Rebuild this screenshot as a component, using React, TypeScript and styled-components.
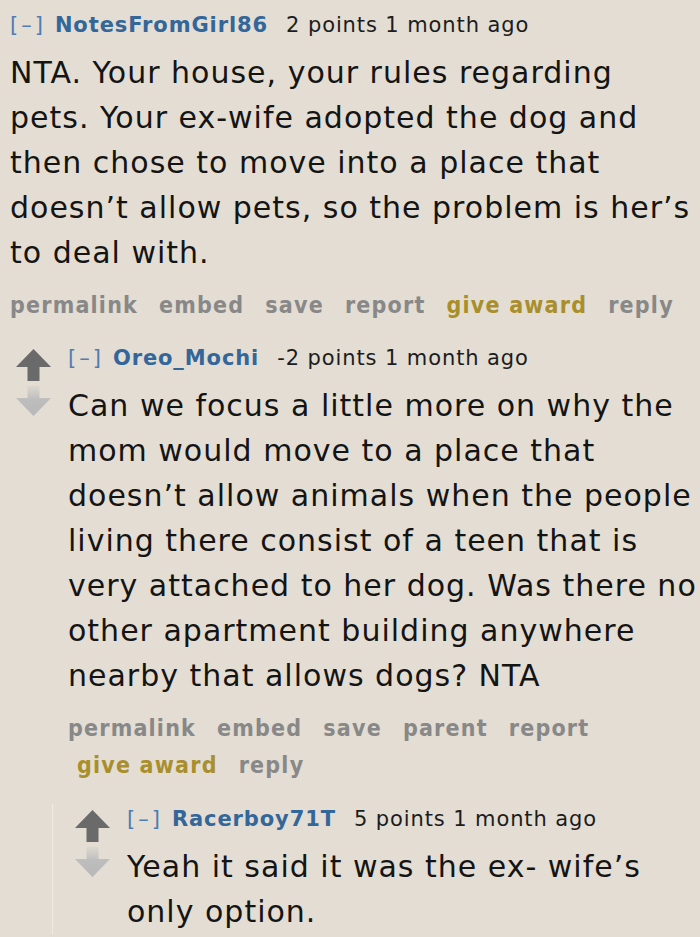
import React from "react";
import styled, { createGlobalStyle } from "styled-components";

const Global = createGlobalStyle`
  html, body { margin: 0; padding: 0; background: #e3ddd3; }
  body { font-family: "DejaVu Sans", Verdana, sans-serif; color: #1c1c1c; }
  * { box-sizing: border-box; }
`;

const Page = styled.div`
  width: 700px;
  height: 937px;
  overflow: hidden;
  background: #e3ddd3;
  padding: 10px 0 0 10px;
`;

const Thread = styled.div<{ $nested?: boolean }>`
  display: flex;
  align-items: flex-start;
  margin-left: ${(p) => (p.$nested ? "42px" : "0")};
  padding-left: ${(p) => (p.$nested ? "16px" : "0")};
  border-left: ${(p) => (p.$nested ? "1px solid #eeeae4" : "none")};
`;

const Votes = styled.div`
  width: 35px;
  flex: none;
  display: flex;
  flex-direction: column;
  align-items: center;
  gap: 5px;
  margin: 6px 0 0 6px;
`;

const Entry = styled.div<{ $withVotes?: boolean }>`
  flex: 1;
  min-width: 0;
  margin-left: ${(p) => (p.$withVotes ? "17px" : "0")};
`;

const Tagline = styled.div`
  display: flex;
  align-items: baseline;
  font-size: 21px;
  line-height: 30px;
  letter-spacing: 0.9px;
  white-space: nowrap;
`;

const Toggle = styled.span`
  color: #4f7db3;
  font-weight: normal;
  margin-right: 9px;
  letter-spacing: 3px;
`;

const Author = styled.span`
  color: #336699;
  font-weight: bold;
  margin-right: 18px;
`;

const Score = styled.span`
  color: #1c1c1c;
`;

const Body = styled.div`
  font-size: 30px;
  line-height: 45px;
  letter-spacing: 1px;
  margin-top: 10px;
  color: #141414;
`;

const Actions = styled.ul`
  list-style: none;
  margin: 12px 0 0;
  padding: 0;
  display: flex;
  flex-wrap: wrap;
  column-gap: 12px;
  row-gap: 1px;
  font-stretch: condensed;
  font-weight: bold;
  font-size: 23px;
  letter-spacing: 1.2px;
  line-height: 36px;
`;

const Action = styled.li<{ $gold?: boolean; $first?: boolean }>`
  color: ${(p) => (p.$gold ? "#a98e2c" : "#888888")};
  padding-left: ${(p) => (p.$first ? "0" : "9px")};
`;

const ArrowSvg = styled.svg`
  display: block;
`;

const UpArrow = () => (
  <ArrowSvg width="35" height="32" viewBox="0 0 35 32">
    <path d="M17.5 0 L35 18 L23.5 18 L23.5 32 L11.5 32 L11.5 18 L0 18 Z" fill="#6a6a6a" />
  </ArrowSvg>
);

const DownArrow = ({ id }: { id: string }) => (
  <ArrowSvg width="35" height="30" viewBox="0 0 35 30">
    <defs>
      <linearGradient id={id} x1="0" y1="0" x2="0" y2="1">
        <stop offset="0" stopColor="#c4c4c4" stopOpacity="0.25" />
        <stop offset="0.45" stopColor="#bdbdbd" />
        <stop offset="1" stopColor="#b8b8b8" />
      </linearGradient>
    </defs>
    <path d="M11.5 0 L23.5 0 L23.5 12 L35 12 L17.5 30 L0 12 L11.5 12 Z" fill={`url(#${id})`} />
  </ArrowSvg>
);

type C = {
  author: string;
  score: string;
  body: string;
  actions: { label: string; gold?: boolean }[];
};

const Comment = ({ c, votes }: { c: C; votes?: boolean }) => (
  <Entry $withVotes={votes}>
    <Tagline>
      <Toggle>[–]</Toggle>
      <Author>{c.author}</Author>
      <Score>{c.score}</Score>
    </Tagline>
    <Body>{c.body}</Body>
    {c.actions.length > 0 && (
      <Actions>
        {c.actions.map((a, i) => (
          <Action key={a.label} $gold={a.gold} $first={i === 0}>
            {a.label}
          </Action>
        ))}
      </Actions>
    )}
  </Entry>
);

const Level = styled.div<{ $top?: number }>`
  margin-top: ${(p) => p.$top ?? 0}px;
`;

export default function App() {
  const c1: C = {
    author: "NotesFromGirl86",
    score: "2 points 1 month ago",
    body:
      "NTA. Your house, your rules regarding pets. Your ex-wife adopted the dog and then chose to move into a place that doesn’t allow pets, so the problem is her’s to deal with.",
    actions: [
      { label: "permalink" },
      { label: "embed" },
      { label: "save" },
      { label: "report" },
      { label: "give award", gold: true },
      { label: "reply" },
    ],
  };
  const c2: C = {
    author: "Oreo_Mochi",
    score: "-2 points 1 month ago",
    body:
      "Can we focus a little more on why the mom would move to a place that doesn’t allow animals when the people living there consist of a teen that is very attached to her dog. Was there no other apartment building anywhere nearby that allows dogs? NTA",
    actions: [
      { label: "permalink" },
      { label: "embed" },
      { label: "save" },
      { label: "parent" },
      { label: "report" },
      { label: "give award", gold: true },
      { label: "reply" },
    ],
  };
  const c3: C = {
    author: "Racerboy71T",
    score: "5 points 1 month ago",
    body: "Yeah it said it was the ex- wife’s only option.",
    actions: [],
  };
  return (
    <>
      <Global />
      <Page>
        <Comment c={c1} />
        <Level $top={20}>
          <Thread>
            <Votes>
              <UpArrow />
              <DownArrow id="d1" />
            </Votes>
            <Comment c={c2} votes />
          </Thread>
        </Level>
        <Level $top={21}>
          <Thread $nested>
            <Votes>
              <UpArrow />
              <DownArrow id="d2" />
            </Votes>
            <Comment c={c3} votes />
          </Thread>
        </Level>
      </Page>
    </>
  );
}
